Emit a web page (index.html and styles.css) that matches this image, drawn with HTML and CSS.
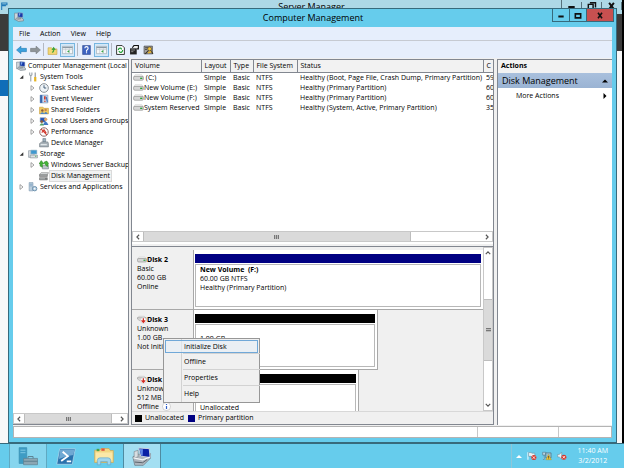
FILE: index.html
```html
<!DOCTYPE html>
<html lang="en">
<head>
<meta charset="utf-8">
<title>Computer Management</title>
<link rel="stylesheet" href="styles.css">
</head>
<body>
<svg class="sprite" aria-hidden="true">
  <symbol id="computer" viewBox="0 0 18 18"><path d="M1 2h6v12H1z" fill="#cfd6dc" stroke="#6d7f8c"/><path d="M7 1l9 1v8l-9-1z" fill="#1738a8" stroke="#a6b8c9"/><path d="M9 2l3 1-3 5z" fill="#7ba9ee"/><path d="M4 11l9-1 4 3v3l-9 1-5-3z" fill="#c3c9ce" stroke="#66737d"/><path d="M6 13l7-1" stroke="#4c5a66"/></symbol>
  <symbol id="tools" viewBox="0 0 18 18"><path d="M3 1v4l2 2 2-2V1M5 7v10" fill="none" stroke="#9aa3aa" stroke-width="2"/><path d="M13 1v8" stroke="#8b9297" stroke-width="2"/><path d="M13 9v8" stroke="#e6b422" stroke-width="4"/></symbol>
  <symbol id="clock" viewBox="0 0 18 18"><circle cx="9" cy="9" r="7.8" fill="#eef3f7" stroke="#8b9298" stroke-width="1.8"/><path d="M9 4v5h4" fill="none" stroke="#35506b" stroke-width="1.6"/></symbol>
  <symbol id="event" viewBox="0 0 18 18"><path d="M2 2h14v14H2z" fill="#c8dcf2" stroke="#6884a8"/><path d="M2 2h4v14H2z" fill="#3767ae"/><path d="M9 4h3v6H9zM9 12h3v2H9z" fill="#d43b2a"/><path d="M13 5l2 9" stroke="#3c70b9" stroke-width="2"/></symbol>
  <symbol id="shared" viewBox="0 0 18 18"><path d="M1 4h6l2 2h8v10H1z" fill="#f0cb62" stroke="#c4952f"/><circle cx="6" cy="10" r="2.2" fill="#8a5a3c"/><circle cx="12" cy="9" r="2.2" fill="#c98350"/><path d="M2 16q4-6 8 0zM9 16q3-7 7 0z" fill="#4d86c5"/></symbol>
  <symbol id="users" viewBox="0 0 18 18"><path d="M2 3h10v8H2z" fill="#2554b5" stroke="#9fb2c6"/><circle cx="12" cy="6" r="3" fill="#dfa46b"/><path d="M7 16q5-11 10 0z" fill="#3f78c4"/><circle cx="5" cy="10" r="2.4" fill="#8f5b39"/><path d="M1 17q4-8 8 0z" fill="#54a067"/></symbol>
  <symbol id="perf" viewBox="0 0 18 18"><circle cx="9" cy="9" r="7.6" fill="#fff" stroke="#8c6b69" stroke-width="1.8"/><path d="M4 4l10 10M5 10l4-5 4 6" stroke="#d33a2f" stroke-width="2" fill="none"/></symbol>
  <symbol id="device" viewBox="0 0 18 18"><path d="M7 1h5v6H7z" fill="#9eb0bd" stroke="#61727e"/><path d="M1 10l4-3h11l1 3v6H1z" fill="#a8b2b9" stroke="#6a757d"/><path d="M3 12h11" stroke="#e8edf0" stroke-width="2"/></symbol>
  <symbol id="storage" viewBox="0 0 18 18"><path d="M1 3h10v12H1z" fill="#d8dfe4" stroke="#7b8892"/><path d="M5 2h11v7H5z" fill="#3e98cf" stroke="#a5bac7"/><path d="M4 11h13v5H4z" fill="#dde2e4" stroke="#77828a"/><path d="M13 13h2" stroke="#36a845" stroke-width="2"/></symbol>
  <symbol id="backup" viewBox="0 0 18 18"><path d="M6 10h11v6H6z" fill="#bdc5ca" stroke="#6f7a82"/><path d="M2 11V6l-2 1 4-6 5 6H6v6zM9 4l5-2 3 4-2 6-4-4z" fill="#43b336" stroke="#288020"/></symbol>
  <symbol id="diskmgmt" viewBox="0 0 18 18"><path d="M1 6l3-3h13l-2 4H1z" fill="#dadedf" stroke="#777"/><path d="M1 7h14v3H1zM1 12h14v4H1z" fill="#a9adaf" stroke="#666"/><path d="M11 14h3" stroke="#333"/></symbol>
  <symbol id="services" viewBox="0 0 18 18"><path d="M2 1h7v15H2z" fill="#b9cddd" stroke="#7b97ae"/><path d="M3 4h5M3 7h5" stroke="#5f8db3"/><circle cx="12" cy="12" r="4" fill="#b8d0e2" stroke="#688ca8" stroke-width="1.6"/><circle cx="12" cy="12" r="1.4" fill="#fff"/></symbol>
  <symbol id="drive" viewBox="0 0 20 12"><path d="M4 1h12l3 4H1z" fill="#f4f4f4" stroke="#bbb" stroke-width=".8"/><rect x="1" y="4" width="18" height="7" rx="2.5" fill="#d6d6d6" stroke="#7c7c7c"/><path d="M13 7.5h4" stroke="#2d9d39" stroke-width="2.4"/></symbol>
  <symbol id="drivedown" viewBox="0 0 22 18"><path d="M4 2h12l4 4H1z" fill="#f4f4f4" stroke="#aaa"/><path d="M1 5h19v6H5L1 8z" fill="#d6d6d6" stroke="#888"/><circle cx="14" cy="11" r="6.4" fill="#fff" stroke="#bbb"/><path d="M14 6v8m-4-3l4 4 4-4" stroke="#d22b22" stroke-width="2.8" fill="none"/></symbol>
  <symbol id="back" viewBox="0 0 20 16"><path d="M1 8l8-7v4h10v6H9v4z" fill="#3aa0dd" stroke="#2378ae"/></symbol>
  <symbol id="forward" viewBox="0 0 20 16"><path d="M19 8l-8-7v4H1v6h10v4z" fill="#8e9498" stroke="#6f7579"/></symbol>
  <symbol id="upfolder" viewBox="0 0 18 18"><path d="M1 5h6l2 2h8v10H1z" fill="#f2d774" stroke="#c09c3a"/><path d="M8 13q4 0 3-7m-3 3l3-4 3 4" fill="none" stroke="#3aa338" stroke-width="2"/></symbol>
  <symbol id="panes" viewBox="0 0 24 18"><path d="M1 1h22v16H1z" fill="#f5f7f8" stroke="#7f8c95"/><path d="M1 2h22v3H1z" fill="#8b9aa5"/><path d="M8 5v12M16 5v12M2 8h21" stroke="#b0b9bf"/><path d="M16 9v6l-5-3z" fill="#36a545"/></symbol>
  <symbol id="help" viewBox="0 0 16 18"><path d="M1 1h14v16H1z" fill="#3e63c0" stroke="#233f88"/><path d="M5 6q0-3 3-3t3 3q0 2-3 4v2M8 13v2" fill="none" stroke="#fff" stroke-width="2"/></symbol>
  <symbol id="refresh" viewBox="0 0 16 18"><path d="M1 1h10l4 4v12H1z" fill="#fff" stroke="#222" stroke-width="1.6"/><path d="M4 9q1-4 5-3l1 2M12 9q-1 5-5 4l-2-2" fill="none" stroke="#22a136" stroke-width="2.2"/></symbol>
  <symbol id="props" viewBox="0 0 18 18"><path d="M5 5l3-4h8v6h-3" fill="#eee" stroke="#111" stroke-width="2"/><path d="M1 6h12v11H1z" fill="#222"/><path d="M3 9h7M3 12h4" stroke="#aaa" stroke-width="1.4"/></symbol>
  <symbol id="find" viewBox="0 0 18 18"><path d="M1 2h15v14H1z" fill="#a4a4a4" stroke="#222"/><path d="M3 5h5M3 8h3" stroke="#333" stroke-width="1.6"/><circle cx="11" cy="7" r="3.5" fill="#f3c53b" stroke="#453512"/><path d="M9 10l-6 6M13 10l4 6" stroke="#3b3322" stroke-width="2"/><path d="M8 14l6-2" stroke="#e3b02b" stroke-width="3"/></symbol>
  <symbol id="info" viewBox="0 0 18 18"><circle cx="9" cy="9" r="8" fill="#fff" stroke="#aaa"/><path d="M9 4v2M9 8v6" stroke="#2e5ec8" stroke-width="2.4"/></symbol>
  <symbol id="closed" viewBox="0 0 8 10"><path d="M1.5 1l5 4-5 4z" fill="#fff" stroke="#888" stroke-width="1.3"/></symbol>
  <symbol id="open" viewBox="0 0 8 10"><path d="M7 2v6H1z" fill="#333"/></symbol>
  <symbol id="chev" viewBox="0 0 8 8"><path d="M2.5 1l3 3-3 3" fill="none" stroke="#555" stroke-width="1.5"/></symbol>
  <symbol id="solid" viewBox="0 0 8 8"><path d="M2 0l4 4-4 4z" fill="#000"/></symbol>
  <symbol id="min" viewBox="0 0 12 10"><path d="M2 6.5h8" stroke="#111" stroke-width="3"/></symbol>
  <symbol id="max" viewBox="0 0 12 10"><path d="M2 2.5h8v6H2z" fill="none" stroke="#111" stroke-width="2.4"/></symbol>
  <symbol id="restore" viewBox="0 0 12 10"><path d="M4 1h7v6M2 3h6v6H2z" fill="none" stroke="#111" stroke-width="1.8"/></symbol>
  <symbol id="close" viewBox="0 0 12 10"><path d="M3 1l6 8M9 1L3 9" stroke="#111" stroke-width="2.4"/></symbol>
  <symbol id="manager" viewBox="0 0 20 24"><path d="M2 2h15v5H2zM2 10h12M2 2v20" fill="none" stroke="#1f78b8" stroke-width="3"/></symbol>
  <symbol id="server" viewBox="0 0 60 60"><path d="M2 2h24v50H2z" fill="#3e9cc4" stroke="#388bb0" stroke-width="2"/><path d="M6 10h16M6 18h16" stroke="#83cbe6" stroke-width="3"/><path d="M16 36h44v20H16z" fill="#8ba6b3" stroke="#5c7e8e" stroke-width="2"/><path d="M30 36v-6h16v6M16 45h44" fill="none" stroke="#5c7e8e" stroke-width="3"/></symbol>
  <symbol id="shell" viewBox="0 0 54 46"><path d="M10 2h42l-8 42H2z" fill="#2a72ad" stroke="#b3d9ee" stroke-width="2"/><path d="M11 4h39l-3 15Q28 20 8 30z" fill="#6fa9d3"/><path d="M18 10l14 12-18 13M29 36h12" fill="none" stroke="#fff" stroke-width="5"/></symbol>
  <symbol id="explorer" viewBox="0 0 60 54"><path d="M2 8h16l3-5h24l4 6h9v36H2z" fill="#f3d784" stroke="#cda752" stroke-width="2"/><path d="M8 4h8v7H8z" fill="#46a54b"/><path d="M22 3h10v7H22z" fill="#df5543"/><path d="M5 15h50v24H5z" fill="#fbe8a8"/><path d="M10 52V39q0-8 8-8h24q8 0 8 8v13H40V42H20v10z" fill="#9fd5ed" stroke="#65a8c9" stroke-width="2"/></symbol>
  <symbol id="station" viewBox="0 0 60 58"><path d="M2 30l16-8 38-2v14L34 56H8z" fill="#aeb6be" stroke="#667078" stroke-width="2"/><path d="M6 14l12-4v20L6 34z" fill="#d8dde1" stroke="#7d878f" stroke-width="2"/><path d="M20 3l32 2 3 27-29-4z" fill="#0b1fa5" stroke="#cad1db" stroke-width="3"/><path d="M23 6l10 1-1 20-5-1z" fill="#6488e6"/><path d="M4 33l28 6 22-8" fill="none" stroke="#f1f4f6" stroke-width="4"/><path d="M8 46l24 2 14-10" fill="none" stroke="#59636b" stroke-width="3"/></symbol>
  <symbol id="flag" viewBox="0 0 32 28"><path d="M3 2v24" stroke="#fff" stroke-width="3"/><path d="M5 3h8l3 2h9v12h-9l-3-2H5z" fill="#e9f3f7" stroke="#557b8c" stroke-width="1.5"/><circle cx="22" cy="19" r="8" fill="#d6362b"/><path d="M18 15l8 8M26 15l-8 8" stroke="#fff" stroke-width="2.6"/></symbol>
  <symbol id="network" viewBox="0 0 32 28"><path d="M2 2h10v9H2zM7 11v14H3" fill="#b8d6e2" stroke="#567788" stroke-width="2"/><path d="M12 4h17v16H12z" fill="#9bc0d0" stroke="#456778" stroke-width="2"/><path d="M21 9l9 17H12z" fill="#f5c52e" stroke="#a57d10"/><path d="M21 14v6M21 22v2" stroke="#333" stroke-width="2.4"/></symbol>
  <symbol id="sound" viewBox="0 0 32 28"><path d="M2 9h5l8-7v22l-8-7H2z" fill="#e9f2f5" stroke="#64828f" stroke-width="1.6"/><circle cx="22" cy="18" r="8" fill="#d6362b"/><path d="M18 14l8 8M26 14l-8 8" stroke="#fff" stroke-width="2.6"/></symbol>
</svg>

<div class="desktop">
  <section class="behind" aria-label="Server Manager">
    <header class="behind-title"><svg class="i-title"><use href="#manager"/></svg><span>Server Manager</span>
      <div class="behind-controls"><svg><use href="#min"/></svg><svg><use href="#restore"/></svg><svg><use href="#close"/></svg></div></header>
    <div class="behind-nav"></div>
    <div class="behind-gap"></div>
    <div class="behind-selected"></div>
  </section>

  <main class="window">
    <header class="titlebar">
      <svg class="icon"><use href="#computer"/></svg>
      <h1>Computer Management</h1>
      <div class="controls">
        <button aria-label="Minimize"><svg><use href="#min"/></svg></button>
        <button aria-label="Maximize"><svg><use href="#max"/></svg></button>
        <button class="close" aria-label="Close"><svg><use href="#close"/></svg></button>
      </div>
    </header>
    <div class="client">
      <nav class="menubar"><button>File</button><button>Action</button><button>View</button><button>Help</button></nav>
      <div class="toolbar">
        <button aria-label="Back"><svg><use href="#back"/></svg></button>
        <button aria-label="Forward"><svg><use href="#forward"/></svg></button>
        <i class="sep"></i>
        <button aria-label="Up"><svg><use href="#upfolder"/></svg></button>
        <button class="on" aria-label="Console tree"><svg><use href="#panes"/></svg></button>
        <i class="sep"></i>
        <button aria-label="Help topics"><svg><use href="#help"/></svg></button>
        <button class="on" aria-label="Action pane"><svg><use href="#panes"/></svg></button>
        <i class="sep"></i>
        <button aria-label="Refresh"><svg><use href="#refresh"/></svg></button>
        <button aria-label="Properties"><svg><use href="#props"/></svg></button>
        <button aria-label="Settings"><svg><use href="#find"/></svg></button>
      </div>
      <div class="panes">
        <aside class="tree-pane">
          <ul class="tree">
            <li class="root"><svg class="icon"><use href="#computer"/></svg><span>Computer Management (Local</span></li>
            <li class="l1"><svg class="tw"><use href="#open"/></svg><svg class="icon"><use href="#tools"/></svg><span>System Tools</span></li>
            <li class="l2"><svg class="tw"><use href="#closed"/></svg><svg class="icon"><use href="#clock"/></svg><span>Task Scheduler</span></li>
            <li class="l2"><svg class="tw"><use href="#closed"/></svg><svg class="icon"><use href="#event"/></svg><span>Event Viewer</span></li>
            <li class="l2"><svg class="tw"><use href="#closed"/></svg><svg class="icon"><use href="#shared"/></svg><span>Shared Folders</span></li>
            <li class="l2"><svg class="tw"><use href="#closed"/></svg><svg class="icon"><use href="#users"/></svg><span>Local Users and Groups</span></li>
            <li class="l2"><svg class="tw"><use href="#closed"/></svg><svg class="icon"><use href="#perf"/></svg><span>Performance</span></li>
            <li class="l2"><svg class="tw"></svg><svg class="icon"><use href="#device"/></svg><span>Device Manager</span></li>
            <li class="l1"><svg class="tw"><use href="#open"/></svg><svg class="icon"><use href="#storage"/></svg><span>Storage</span></li>
            <li class="l2"><svg class="tw"><use href="#closed"/></svg><svg class="icon"><use href="#backup"/></svg><span>Windows Server Backup</span></li>
            <li class="l2"><svg class="tw"></svg><svg class="icon"><use href="#diskmgmt"/></svg><span class="selected">Disk Management</span></li>
            <li class="l1"><svg class="tw"><use href="#closed"/></svg><svg class="icon"><use href="#services"/></svg><span>Services and Applications</span></li>
          </ul>
          <div class="hscroll tree-scroll">
            <button aria-label="Scroll left"><svg class="left"><use href="#chev"/></svg></button>
            <div class="track"><div class="thumb"></div></div>
            <button aria-label="Scroll right"><svg><use href="#chev"/></svg></button>
          </div>
        </aside>

        <section class="center">
          <div class="volumes">
            <table>
              <colgroup><col class="c-vol"><col class="c-lay"><col class="c-type"><col class="c-fs"><col><col class="c-cap"></colgroup>
              <thead><tr><th>Volume</th><th>Layout</th><th>Type</th><th>File System</th><th>Status</th><th>C</th></tr></thead>
              <tbody>
                <tr><td><svg><use href="#drive"/></svg> (C:)</td><td>Simple</td><td>Basic</td><td>NTFS</td><td>Healthy (Boot, Page File, Crash Dump, Primary Partition)</td><td>59</td></tr>
                <tr><td><svg><use href="#drive"/></svg>New Volume (E:)</td><td>Simple</td><td>Basic</td><td>NTFS</td><td>Healthy (Primary Partition)</td><td>60</td></tr>
                <tr><td><svg><use href="#drive"/></svg>New Volume (F:)</td><td>Simple</td><td>Basic</td><td>NTFS</td><td>Healthy (Primary Partition)</td><td>60</td></tr>
                <tr><td><svg><use href="#drive"/></svg>System Reserved</td><td>Simple</td><td>Basic</td><td>NTFS</td><td>Healthy (System, Active, Primary Partition)</td><td>35</td></tr>
              </tbody>
            </table>
            <div class="hscroll volume-scroll">
              <button aria-label="Scroll left"><svg class="left"><use href="#chev"/></svg></button>
              <div class="track"><div class="thumb"></div></div>
              <button aria-label="Scroll right"><svg><use href="#chev"/></svg></button>
            </div>
          </div>
          <div class="graph">
            <div class="disks">
              <article class="disk">
                <div class="info"><b><svg class="drv"><use href="#drive"/></svg>Disk 2</b><span>Basic</span><span>60.00 GB</span><span>Online</span></div>
                <div class="part primary"><div class="bar"></div><div class="box"><b>New Volume&nbsp; (F:)</b><span>60.00 GB NTFS</span><span>Healthy (Primary Partition)</span></div></div>
              </article>
              <article class="disk">
                <div class="info"><b><svg class="drv tall"><use href="#drivedown"/></svg>Disk 3</b><span>Unknown</span><span>1.00 GB</span><span>Not Initi</span></div>
                <div class="part free-large"><div class="bar"></div><div class="box"><span>&nbsp;</span><span>1.00 GB</span></div></div>
              </article>
              <article class="disk">
                <div class="info"><b><svg class="drv tall"><use href="#drivedown"/></svg>Disk</b><span>Unknown</span><span>512 MB</span><span class="state">Offline <svg><use href="#info"/></svg></span></div>
                <div class="part free-small"><div class="bar"></div><div class="box"><span>&nbsp;</span><span>&nbsp;</span><span>Unallocated</span></div></div>
              </article>
            </div>
            <div class="vscroll">
              <button aria-label="Scroll up"><svg class="up"><use href="#chev"/></svg></button>
              <div class="track"><div class="thumb"></div></div>
              <button aria-label="Scroll down"><svg class="down"><use href="#chev"/></svg></button>
            </div>
            <div class="context" role="menu">
              <button class="hot" role="menuitem">Initialize Disk</button>
              <button role="menuitem">Offline</button>
              <button role="menuitem">Properties</button>
              <button role="menuitem">Help</button>
            </div>
          </div>
          <div class="legend"><i class="black"></i>Unallocated<i class="navy"></i>Primary partition</div>
        </section>

        <aside class="actions">
          <h2>Actions</h2>
          <button class="group">Disk Management<svg class="up"><use href="#solid"/></svg></button>
          <button class="more">More Actions<svg><use href="#solid"/></svg></button>
        </aside>
      </div>
      <footer class="status"><div></div><div></div><div></div></footer>
    </div>
  </main>
</div>

<footer class="taskbar">
  <button class="task open" aria-label="Server Manager"><svg><use href="#server"/></svg></button>
  <button class="task" aria-label="PowerShell"><svg><use href="#shell"/></svg></button>
  <button class="task" aria-label="File Explorer"><svg><use href="#explorer"/></svg></button>
  <button class="task current" aria-label="Computer Management"><svg><use href="#station"/></svg></button>
  <div class="tray">
    <i class="expand"></i>
    <svg><use href="#flag"/></svg><svg><use href="#network"/></svg><svg><use href="#sound"/></svg>
    <time>11:40 AM<br>3/2/2012</time>
  </div>
</footer>
</body>
</html>
```
FILE: styles.css
```css
* { box-sizing: border-box; }
html, body { height: 100%; }
body {
  margin: 0;
  display: flex;
  flex-direction: column;
  overflow: hidden;
  font: 7px/10px "Open Sans", "Noto Sans", sans-serif;
  color: #000;
  background: #fff;
}
button { font: inherit; color: inherit; border: 0; padding: 0; margin: 0; background: none; }
svg { display: block; flex: none; }
h1, h2 { margin: 0; font: inherit; }
.sprite { position: absolute; width: 0; height: 0; }

.desktop { position: relative; flex: 1; min-height: 0; }

/* Window in the background */
.behind { height: 100%; display: flex; flex-direction: column; background: #f8f8f8; border-right: 2px solid #000; }
.behind-title { height: 14px; flex: none; display: flex; align-items: flex-start; background: #add8e6; font-size: 9px; line-height: 14px; }
.behind-title span { flex: 1; text-align: center; padding-left: 54px; }
.i-title { width: 7px; height: 9px; margin: 2px 0 0 1px; }
.behind-controls { display: flex; border-left: 1px solid #57717c; }
.behind-controls svg { width: 20px; height: 8px; margin-top: 2px; border-right: 1px solid #57717c; }
.behind-nav { height: 37px; background: #3b3b3b; }
.behind-gap { height: 29px; }
.behind-selected { height: 16px; width: 8px; background: #0f6db8; }

/* Main window */
.window {
  position: absolute;
  inset: 8px 7px 0 8px;
  display: flex;
  flex-direction: column;
  padding: 0 4px 4px;
  background: #66ccec;
  border: 1px solid #376a7c;
}
.titlebar { height: 18px; flex: none; display: flex; align-items: flex-start; }
.titlebar .icon { width: 10px; height: 10px; margin: 3px 0 0 1px; }
.titlebar h1 { flex: 1; text-align: center; font-size: 9px; line-height: 17px; padding-left: 50px; }
.controls { display: flex; margin-right: -2px; }
.controls button { width: 17px; height: 13px; display: grid; place-items: center; border: solid #376a7c; border-width: 0 0 1px 1px; }
.controls svg { width: 8px; height: 7px; }
.controls .close { width: 28px; background: #c75050; border-right-width: 1px; }

.client { flex: 1; min-height: 0; display: flex; flex-direction: column; background: #f0f0f0; }
.menubar { height: 14px; flex: none; display: flex; align-items: center; gap: 10px; padding: 0 6px; background: #e6eefc; border-bottom: 1px solid #c6cad2; }
.toolbar { height: 17px; flex: none; display: flex; align-items: center; gap: 2px; padding: 0 2px; background: #e6eefc; }
.toolbar button { width: 12px; height: 14px; display: grid; place-items: center; }
.toolbar svg { width: 11px; height: 10px; }
.toolbar .on { width: 15px; background: #d4e8f8; border: 1px solid #76b6e0; }
.sep { width: 1px; height: 13px; background: #b3b8c2; }

.panes {
  flex: 1;
  min-height: 0;
  display: grid;
  grid-template-columns: 116px minmax(0, 1fr) 115px;
  grid-template-rows: minmax(0, 1fr);
  column-gap: 3px;
  padding-top: 1px;
}

/* Console tree */
.tree-pane { min-width: 0; display: flex; flex-direction: column; background: #fff; border: 1px solid #828790; border-left: 0; }
.tree { flex: 1; margin: 0; padding: 0; list-style: none; overflow: hidden; }
.tree li { height: 11px; display: flex; align-items: center; white-space: nowrap; }
.tree .icon { width: 10px; height: 10px; margin-right: 1px; }
.tree .tw { width: 5px; height: 6px; margin-right: 4px; }
.tree span { padding: 0 1px; }
.root { padding-left: 3px; }
.l1 { padding-left: 6px; }
.l2 { padding-left: 17px; }
.tree .selected { background: #f2f2f2; outline: 1px solid #dadada; }

/* Scroll bars */
.hscroll { height: 11px; flex: none; display: flex; background: #fff; border: 1px solid #c8c8c8; }
.hscroll button { width: 10px; display: grid; place-items: center; }
.vscroll { width: 10px; flex: none; display: flex; flex-direction: column; background: #fff; border: 1px solid #c8c8c8; }
.vscroll button { height: 10px; display: grid; place-items: center; }
.hscroll svg, .vscroll svg { width: 6px; height: 6px; }
.left { transform: rotate(180deg); }
.up { transform: rotate(-90deg); }
.down { transform: rotate(90deg); }
.track { flex: 1; min-width: 0; min-height: 0; }
.thumb { height: 100%; display: grid; place-items: center; background: #dadada; border: solid #bdbdbd; border-width: 0 1px; }
.thumb::after { content: ""; width: 5px; height: 4px; background: repeating-linear-gradient(90deg, #777 0 1px, #bbb 1px 2px); }
.tree-scroll .thumb { width: 95%; }
.volume-scroll { margin-bottom: 2px; }
.volume-scroll .thumb { width: 79%; }
.vscroll .track { padding-top: 41px; }
.vscroll .thumb { height: 62px; border-width: 1px 0; }
.vscroll .thumb::after { background: repeating-linear-gradient(#777 0 1px, #bbb 1px 2px); }

/* Volume list */
.center { min-width: 0; display: flex; flex-direction: column; border: 1px solid #828790; border-left-width: 0; box-shadow: -1px 0 #828790; }
.volumes { flex: 0 0 184px; display: flex; flex-direction: column; background: #fff; }
.volumes table { width: 100%; table-layout: fixed; border-collapse: collapse; margin-bottom: auto; }
.c-vol { width: 69px; }
.c-lay { width: 29px; }
.c-type { width: 23px; }
.c-fs { width: 44px; }
.c-cap { width: 10px; }
th, td { padding: 0 0 0 3px; text-align: left; font-weight: 400; white-space: nowrap; overflow: hidden; }
th { height: 12px; background: #f2f2f2; border-right: 1px solid #828790; border-bottom: 1px solid #828790; }
th:last-child { border-right: 0; }
td { height: 10px; }
td:first-child { padding-left: 1px; }
td svg { display: inline-block; width: 11px; height: 7px; vertical-align: middle; }

/* Disk map */
.graph { position: relative; flex: 1; min-height: 0; display: flex; margin-top: 2px; border-top: 1px solid #828790; }
.disks { flex: 1; min-width: 0; overflow: hidden; padding-top: 3px; }
.disk { height: 60px; display: flex; line-height: 9px; }
.disk span, .disk b { display: block; white-space: nowrap; }
.info { width: 62px; flex: none; padding: 5px 0 0 5px; overflow: hidden; border: solid #a8a8a8; border-width: 0 1px 1px 0; }
.disk .info b { display: flex; align-items: center; }
.drv { width: 10px; height: 7px; }
.drv.tall { height: 9px; }
.disk .state { display: flex; gap: 3px; }
.state svg { width: 9px; height: 9px; }
.part { display: flex; flex-direction: column; padding: 4px 2px 2px 1px; background: #fff; border-bottom: 1px solid #a8a8a8; }
.primary { flex: 1; }
.free-large { width: 184px; border-right: 1px solid #a8a8a8; }
.free-small { width: 165px; border-right: 1px solid #a8a8a8; }
.bar { height: 9px; background: #000; }
.primary .bar { background: #000082; }
.box { flex: 1; min-height: 0; margin-top: 1px; padding-left: 4px; border: 1px solid #b8b8b8; }
.legend { height: 13px; flex: none; display: flex; align-items: center; padding-left: 3px; border-top: 1px solid #d8d8d8; }
.legend i { width: 7px; height: 7px; margin-right: 3px; background: #000; }
.legend .navy { margin-left: 4px; background: #000082; }

.context {
  position: absolute;
  left: 31px;
  top: 91px;
  width: 97px;
  padding: 1px;
  background: linear-gradient(90deg, transparent 17px, #d2d2d2 17px 18px, transparent 18px) #f0f0f0;
  border: 1px solid #979797;
}
.context button { display: block; width: 77px; height: 16px; margin-left: 18px; padding-left: 1px; text-align: left; }
.context .hot { width: 100%; height: 13px; margin-left: 0; background: #e6eff799; border: 1px solid #70a8d8; padding-left: 18px; }
.context button + button { border-top: 1px solid #d2d2d2; }

/* Actions */
.actions { background: #fff; border: solid #828790; border-width: 1px 0 0 1px; }
.actions h2 { height: 13px; padding-left: 3px; font-weight: 700; line-height: 12px; background: #f2f2f2; }
.actions button { width: 100%; display: flex; align-items: center; justify-content: space-between; padding-right: 4px; }
.actions svg { width: 6px; height: 6px; }
.actions .group { height: 15px; padding-left: 4px; font-size: 9px; background: linear-gradient(#a9c0dd, #9ab3d3); }
.actions .more { height: 15px; padding-left: 18px; }

.status { height: 12px; flex: none; margin-top: 1px; display: grid; grid-template-columns: 1fr 81px 53px; background: #fff; border: 1px solid #b4b4b4; }
.status div + div { border-left: 1px solid #c8c8c8; }

/* Taskbar */
.taskbar { height: 25px; flex: none; display: flex; padding-left: 9px; background: #66ccec; border-top: 1px solid #376a7c; }
.task { width: 38px; display: grid; place-items: center; border: 1px solid transparent; border-width: 0 1px; }
.task svg { width: 20px; height: 19px; }
.task.open { background: #86d5ee; border-color: #5fa9c2; }
.task.current { background: #a3dff2; border-color: #4e8ba1; }
.tray { margin-left: auto; display: flex; align-items: center; gap: 5px; padding: 0 16px 0 4px; border-left: 1px solid #8dc7da; color: #fff; }
.tray svg { width: 10px; height: 10px; }
.expand { width: 0; height: 0; border: solid transparent; border-width: 0 3px 3px; border-bottom-color: #fff; }
.tray time { padding-left: 6px; text-align: center; }
```
